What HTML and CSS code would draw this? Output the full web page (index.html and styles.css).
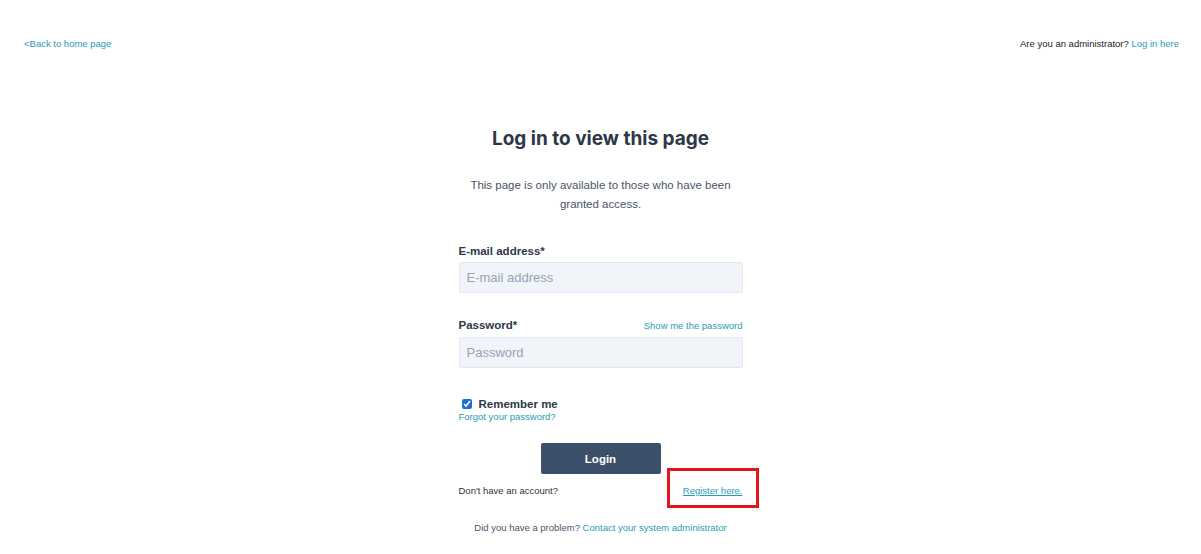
FILE: index.html
```html
<!DOCTYPE html>
<html lang="en">
  <head>
    <meta charset="UTF-8" />
    <meta name="viewport" content="width=device-width, initial-scale=1.0" />
    <link rel="stylesheet" href="styles.css">
  </head>
  <body>
    <header class="topbar">
      <a href="#" class="link">&lt;Back to home page</a>
      <span>Are you an administrator? <a href="#" class="link">Log in here</a></span>
    </header>

    <main class="login">
      <h1>Log in to view this page</h1>
      <p class="intro">This page is only available to those who have been granted access.</p>

      <form class="login-form">
        <div class="field">
          <div class="field-head">
            <label for="email">E-mail address*</label>
          </div>
          <input id="email" type="email" placeholder="E-mail address" />
        </div>
        <div class="field">
          <div class="field-head">
            <label for="password">Password*</label>
            <a href="#" class="link small">Show me the password</a>
          </div>
          <input id="password" type="password" placeholder="Password" />
        </div>

        <div class="remember">
          <label class="check">
            <input type="checkbox" checked />
            <span>Remember me</span>
          </label>
          <a href="#" class="link">Forgot your password?</a>
        </div>

        <button type="button" class="btn">Login</button>

        <div class="register">
          <span>Don't have an account?</span>
          <span class="register-link">
            <a href="#" class="link underline">Register here.</a>
            <span class="highlight"></span>
          </span>
        </div>
      </form>

      <p class="help">Did you have a problem? <a href="#" class="link">Contact your system administrator</a></p>
    </main>
  </body>
</html>
```

FILE: styles.css
```css
:root {
  --teal: #2a9bb5;
  --ink: #2d3748;
  --muted: #4a5568;
}

html,
body {
  width: 100%;
  height: 100%;
}

body {
  margin: 0;
  font-family: "Liberation Sans", Arial, sans-serif;
  color: #222;
  background: #fff;
}

.link {
  color: var(--teal);
  text-decoration: none;
}

.link.underline {
  text-decoration: underline;
}

/* Top bar */

.topbar {
  display: flex;
  justify-content: space-between;
  padding: 38px 22px 0 24px;
  font-size: 9.5px;
  line-height: 12px;
}

/* Login column */

.login {
  width: 284px;
  margin: 0 auto;
  display: flex;
  flex-direction: column;
  align-items: center;
}

.login h1 {
  margin: 77px 0 0;
  font-family: Inter, sans-serif;
  font-size: 19px;
  line-height: 24px;
  font-weight: 700;
  color: var(--ink);
}

.intro {
  margin: 25px 0 0;
  width: 284px;
  font-size: 11.5px;
  line-height: 19px;
  color: var(--muted);
  text-align: center;
}

.login-form {
  width: 100%;
  margin-top: 30px;
  display: flex;
  flex-direction: column;
}

.field + .field {
  margin-top: 25px;
}

.field-head {
  display: flex;
  justify-content: space-between;
  align-items: baseline;
  line-height: 14px;
  margin-bottom: 4px;
}

.field-head label {
  font-size: 11.5px;
  font-weight: 700;
  color: var(--ink);
}

.field-head .small {
  font-size: 9.5px;
}

.field input {
  box-sizing: border-box;
  width: 100%;
  height: 31px;
  padding: 0 7px;
  font: inherit;
  font-size: 13px;
  background: #f1f5f9;
  border: 1px solid #e2e8f0;
  border-radius: 2px;
  color: var(--ink);
}

.field input::placeholder {
  color: #94a3b8;
}

.remember {
  margin-top: 29px;
  display: flex;
  flex-direction: column;
  align-items: flex-start;
  font-size: 9.5px;
  line-height: 12px;
}

.check {
  display: flex;
  align-items: center;
  height: 14px;
  font-size: 11.5px;
  font-weight: 700;
  color: var(--ink);
}

.check input {
  width: 10px;
  height: 10px;
  margin: 0 7px 0 3px;
  accent-color: #1a6fd6;
}

.btn {
  align-self: center;
  margin-top: 20px;
  width: 120px;
  height: 31px;
  border: none;
  border-radius: 2px;
  background: #3b5068;
  color: #fff;
  font: inherit;
  font-size: 11.5px;
  font-weight: 700;
}

.register {
  margin-top: 11px;
  display: flex;
  justify-content: space-between;
  font-size: 9.5px;
  line-height: 12px;
  color: #333;
}

.register-link {
  position: relative;
}

/* annotation box drawn over the link */
.highlight {
  position: absolute;
  left: -16px;
  right: -16px;
  top: -17px;
  bottom: -11px;
  border: 3px solid #e3151f;
}

.help {
  margin: 25px 0 0;
  font-size: 9.5px;
  line-height: 12px;
  color: #4a5568;
}
```
